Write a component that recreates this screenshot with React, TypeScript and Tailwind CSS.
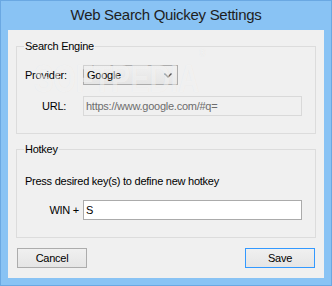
import React from "react"

function Button({ label, primary }: { label: string; primary?: boolean }) {
  return (
    <div
      className={`w-[70px] h-[20px] flex items-center justify-center border bg-gradient-to-b from-[#f0f0f0] to-[#e5e5e5] ${
        primary ? "border-[#3399ff]" : "border-[#acacac]"
      }`}
    >
      {label}
    </div>
  )
}

function GroupBox({ title, className, children }: { title: string; className: string; children: React.ReactNode }) {
  return (
    <div className={`relative border border-[#dcdcdc] ${className}`}>
      <span className="absolute top-[-7px] left-[7px] px-[1px] bg-[#f0f0f0] leading-[13px]">{title}</span>
      {children}
    </div>
  )
}

export default function App() {
  return (
    <div className="relative w-[332px] h-[286px] bg-[#89c3f4] border border-[#6aa8e2] flex flex-col font-['Liberation_Sans',Arial,sans-serif] text-black">
      <div className="h-[29px] flex items-center justify-center text-[15px] tracking-[-0.3px] text-[#1e1e1e]">
        Web Search Quickey Settings
      </div>

      <div className="mx-[7px] h-[248px] bg-[#f0f0f0] px-[8px] pt-[16px] flex flex-col text-[11px] tracking-[-0.25px] leading-[13px]">
        <GroupBox title="Search Engine" className="h-[88px] pt-[18px]">
          <div className="flex items-center pl-[8px]">
            <span className="w-[58px]">Provider:</span>
            <div className="w-[95px] h-[20px] flex items-center justify-between border border-[#acacac] bg-gradient-to-b from-[#f0f0f0] to-[#e5e5e5] pl-[3px] pr-[5px]">
              <span>Google</span>
              <svg width="8" height="5" viewBox="0 0 8 5">
                <polyline points="0.5,0.5 4,4 7.5,0.5" fill="none" stroke="#555" strokeWidth="1.4" />
              </svg>
            </div>
          </div>
          <div className="flex items-center pl-[8px] mt-[11px]">
            <span className="w-[58px] pl-[17px]">URL:</span>
            <div className="w-[219px] h-[20px] flex items-center border border-[#d9d9d9] bg-[#f0f0f0] pl-[2px] text-[#6d6d6d]">
              https://www.google.com/#q=
            </div>
          </div>
        </GroupBox>

        <GroupBox title="Hotkey" className="h-[89px] mt-[15px] pt-[25px]">
          <div className="pl-[8px]">Press desired key(s) to define new hotkey</div>
          <div className="flex items-center pl-[8px] mt-[12px]">
            <span className="w-[58px] text-right pr-[4px]">WIN +</span>
            <div className="w-[219px] h-[20px] flex items-center border border-[#ababab] bg-white pl-[2px]">S</div>
          </div>
        </GroupBox>

        <div className="flex justify-between mt-[10px] px-[1px]">
          <Button label="Cancel" />
          <Button label="Save" primary />
        </div>
      </div>

      {/* watermark */}
      <div className="absolute left-[33px] top-[58px] origin-left scale-x-[0.74] text-[39px] font-bold leading-none text-white/50 [text-shadow:0_0_1px_rgba(0,0,0,0.06)] pointer-events-none select-none">
        SOFTPEDIA<sup className="text-[12px] align-top">®</sup>
      </div>
    </div>
  )
}
